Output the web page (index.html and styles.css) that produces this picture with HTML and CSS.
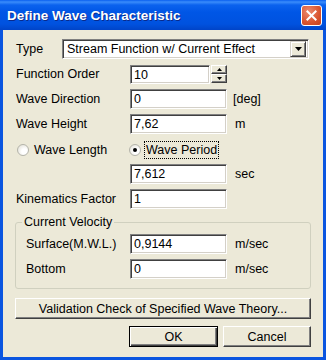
FILE: index.html
```
<!DOCTYPE html>
<html lang="en">
<head>
    <meta charset="UTF-8">
    <title>Define Wave Characteristic</title>
    <link rel="stylesheet" href="styles.css">
</head>
<body>
    <div class="window">
        <div class="titlebar">
            <span class="title">Define Wave Characteristic</span>
            <span class="close">
                <svg width="21" height="21" viewBox="0 0 21 21"><path d="M6 6 L15 15 M15 6 L6 15" stroke="#fff" stroke-width="2.2" stroke-linecap="square"/></svg>
            </span>
        </div>
        <div class="body">
            <div class="row">
                <span class="label type-label">Type</span>
                <div class="select">
                    <span class="select-text">Stream Function w/ Current Effect</span>
                    <span class="drop"><svg width="7" height="4" viewBox="0 0 7 4"><path d="M0 0 H7 L3.5 4 Z" fill="#000"/></svg></span>
                </div>
            </div>
            <div class="row">
                <span class="label">Function Order</span>
                <div class="spin">
                    <span class="field spin-field">10</span>
                    <span class="spin-btns">
                        <span class="spin-btn"><svg width="5" height="3" viewBox="0 0 5 3"><path d="M2.5 0 L5 3 H0 Z" fill="#000"/></svg></span>
                        <span class="spin-btn"><svg width="5" height="3" viewBox="0 0 5 3"><path d="M0 0 H5 L2.5 3 Z" fill="#000"/></svg></span>
                    </span>
                </div>
            </div>
            <div class="row">
                <span class="label">Wave Direction</span>
                <span class="field">0</span>
                <span class="unit unit-deg">[deg]</span>
            </div>
            <div class="row">
                <span class="label">Wave Height</span>
                <span class="field">7,62</span>
                <span class="unit">m</span>
            </div>
            <div class="row radio-row">
                <span class="radio-item first">
                    <span class="radio"></span>
                    <span class="radio-text">Wave Length</span>
                </span>
                <span class="radio-item">
                    <span class="radio checked"><span class="dot"></span></span>
                    <span class="radio-text focus">Wave Period</span>
                </span>
            </div>
            <div class="row">
                <span class="label"></span>
                <span class="field">7,612</span>
                <span class="unit">sec</span>
            </div>
            <div class="row">
                <span class="label">Kinematics Factor</span>
                <span class="field">1</span>
            </div>

            <fieldset class="group">
                <legend>Current Velocity</legend>
                <div class="row">
                    <span class="label group-label">Surface(M.W.L.)</span>
                    <span class="field">0,9144</span>
                    <span class="unit">m/sec</span>
                </div>
                <div class="row">
                    <span class="label group-label">Bottom</span>
                    <span class="field">0</span>
                    <span class="unit">m/sec</span>
                </div>
            </fieldset>

            <div class="btn wide">Validation Check of Specified Wave Theory...</div>
            <div class="actions">
                <div class="btn default">OK</div>
                <div class="btn">Cancel</div>
            </div>
        </div>
    </div>
</body>
</html>
```

FILE: styles.css
```
*{
    margin: 0;
    padding: 0;
    box-sizing: border-box;
    font-family: "Liberation Sans", Arial, sans-serif;
}
body {
    background: #ffffff;
}
.window {
    width: 326px;
    height: 360px;
    display: flex;
    flex-direction: column;
    background: #ECE9D8;
}
.titlebar {
    height: 30px;
    display: flex;
    align-items: center;
    justify-content: space-between;
    padding: 0 4px 0 7px;
    background: linear-gradient(to bottom, #0A5FEF 0, #3A8CFB 2px, #0B62EE 5px, #0056E6 12px, #0052DF 24px, #0044C8 30px);
}
.title {
    color: #fff;
    font-weight: bold;
    font-size: 13.5px;
    text-shadow: 1px 1px #0A2A8A;
    margin-top: 1px;
}
.close {
    width: 21px;
    height: 21px;
    border: 1px solid #fff;
    border-radius: 3px;
    background: radial-gradient(circle at 35% 30%, #EC8B70, #D9542F 60%, #C5401C);
    display: flex;
    align-items: center;
    justify-content: center;
}
.close svg {
    display: block;
}
.body {
    flex: 1;
    border: 3px solid #0A55E0;
    border-top: none;
    padding: 9px 12px 0 12px;
    font-size: 12.5px;
    color: #000;
}
.row {
    display: flex;
    align-items: center;
    height: 20px;
    margin-bottom: 5px;
}
.label {
    width: 115px;
    padding-left: 1px;
    flex-shrink: 0;
}
.type-label {
    width: 47px;
}
.field {
    width: 97px;
    height: 20px;
    background: #fff;
    border: 1px solid;
    border-color: #808080 #ffffff #ffffff #808080;
    box-shadow: inset 1px 1px #404040, inset -1px -1px #D4D0C8;
    padding: 2px 0 0 3px;
    line-height: 15px;
}
.unit {
    margin-left: 8px;
}
.unit-deg {
    margin-left: 6px;
}
.select {
    width: 247px;
    height: 20px;
    display: flex;
    align-items: center;
    justify-content: space-between;
    background: #fff;
    border: 1px solid;
    border-color: #808080 #ffffff #ffffff #808080;
    box-shadow: inset 1px 1px #404040, inset -1px -1px #D4D0C8;
    padding: 0 2px 0 4px;
}
.select-text {
    margin-top: -1px;
}
.drop {
    width: 16px;
    height: 16px;
    background: #ECE9D8;
    border: 1px solid;
    border-color: #D4D0C8 #404040 #404040 #D4D0C8;
    box-shadow: inset 1px 1px #fff, inset -1px -1px #808080;
    display: flex;
    align-items: center;
    justify-content: center;
}
.drop svg, .spin-btn svg {
    display: block;
}
.spin {
    display: flex;
    align-items: center;
    width: 97px;
}
.spin-field {
    width: 80px;
    height: 19px;
}
.spin-btns {
    display: flex;
    flex-direction: column;
    margin-left: 1px;
}
.spin-btn {
    width: 16px;
    height: 9px;
    background: #ECE9D8;
    border: 1px solid;
    border-color: #fff #404040 #404040 #fff;
    box-shadow: inset -1px -1px #808080;
    display: flex;
    align-items: center;
    justify-content: center;
}
.radio-row {
    height: 19px;
    margin-top: 6px;
    margin-bottom: 5px;
}
.radio-item {
    display: flex;
    align-items: center;
}
.radio-item.first {
    width: 114px;
    padding-left: 2px;
}
.radio {
    width: 12px;
    height: 12px;
    border-radius: 50%;
    border: 1px solid #B4B4AA;
    background: radial-gradient(circle at 65% 65%, #ffffff 30%, #E2E0D6 90%);
    display: flex;
    align-items: center;
    justify-content: center;
}
.dot {
    width: 4px;
    height: 4px;
    border-radius: 50%;
    background: #000;
}
.radio-text {
    margin-left: 5px;
}
.focus {
    border: 1px dotted #000;
    padding: 1px 1px 1px 1px;
    margin-left: 3px;
}
.group {
    border: 1px solid #D0D0BF;
    border-radius: 3px;
    margin-top: 6px;
    padding: 5px 0 4px 9px;
}
.group legend {
    margin-left: -3px;
    padding: 0 2px;
    font-size: 12.5px;
}
.group-label {
    width: 105px;
}
.btn {
    height: 21px;
    display: flex;
    align-items: center;
    justify-content: center;
    background: #ECE9D8;
    border: 1px solid;
    border-color: #ffffff #404040 #404040 #ffffff;
    box-shadow: inset -1px -1px #808080;
    font-size: 12.5px;
}
.wide {
    margin-top: 9px;
}
.actions {
    display: flex;
    justify-content: flex-end;
    gap: 5px;
    margin-top: 7px;
}
.actions .btn {
    width: 88px;
}
.btn.default {
    width: 89px;
    border: 1px solid #000;
    box-shadow: inset 1px 1px #fff, inset -1px -1px #404040, inset -2px -2px #808080;
}
```
